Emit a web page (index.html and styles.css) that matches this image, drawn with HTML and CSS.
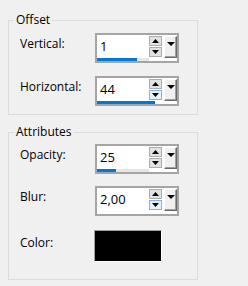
FILE: index.html
```html
<!DOCTYPE html>
<html>
<head>
	<meta charset="UTF-8">
	<title>Shadow</title>
	<link rel="stylesheet" href="styles.css">
</head>
<body>
	<fieldset class="group group-offset">
		<legend>Offset</legend>
		<div class="row">
			<label class="name">Vertical:</label>
			<div class="spin">
				<div class="field">
					<span class="value">1</span>
					<div class="track"><div class="fill" style="width:40px"></div></div>
				</div>
				<div class="arrows">
					<span class="arrow"><svg width="7" height="4"><path d="M0 4h7L3.5 0z"/></svg></span>
					<span class="arrow"><svg width="7" height="4"><path d="M0 0h7L3.5 4z"/></svg></span>
				</div>
				<span class="drop"><svg width="8" height="4"><path d="M0 0h8L4 4z"/></svg></span>
			</div>
		</div>
		<div class="row">
			<label class="name">Horizontal:</label>
			<div class="spin">
				<div class="field">
					<span class="value">44</span>
					<div class="track"><div class="fill" style="width:58px"></div></div>
				</div>
				<div class="arrows">
					<span class="arrow"><svg width="7" height="4"><path d="M0 4h7L3.5 0z"/></svg></span>
					<span class="arrow hot"><svg width="7" height="4"><path d="M0 0h7L3.5 4z"/></svg></span>
				</div>
				<span class="drop"><svg width="8" height="4"><path d="M0 0h8L4 4z"/></svg></span>
			</div>
		</div>
	</fieldset>

	<fieldset class="group group-attr">
		<legend>Attributes</legend>
		<div class="row">
			<label class="name">Opacity:</label>
			<div class="spin">
				<div class="field">
					<span class="value">25</span>
					<div class="track"><div class="fill" style="width:19px"></div></div>
				</div>
				<div class="arrows">
					<span class="arrow"><svg width="7" height="4"><path d="M0 4h7L3.5 0z"/></svg></span>
					<span class="arrow"><svg width="7" height="4"><path d="M0 0h7L3.5 4z"/></svg></span>
				</div>
				<span class="drop"><svg width="8" height="4"><path d="M0 0h8L4 4z"/></svg></span>
			</div>
		</div>
		<div class="row">
			<label class="name">Blur:</label>
			<div class="spin">
				<div class="field">
					<span class="value">2,00</span>
					<div class="track blank"></div>
				</div>
				<div class="arrows">
					<span class="arrow"><svg width="7" height="4"><path d="M0 4h7L3.5 0z"/></svg></span>
					<span class="arrow hot"><svg width="7" height="4"><path d="M0 0h7L3.5 4z"/></svg></span>
				</div>
				<span class="drop"><svg width="8" height="4"><path d="M0 0h8L4 4z"/></svg></span>
			</div>
		</div>
		<div class="row row-color">
			<label class="name">Color:</label>
			<div class="swatch"></div>
		</div>
	</fieldset>
</body>
</html>
```

FILE: styles.css
```css
*{
	margin: 0;
	padding: 0;
	box-sizing: border-box;
}
body{
	background: #f0f0f0;
	font-family: "Open Sans", "Liberation Sans", sans-serif;
	font-size: 12px;
	color: #000;
}
.group{
	width: 190px;
	margin-left: 8px;
	border: 1px solid #dcdcdc;
	padding: 5px 0 8px 11px;
	display: flex;
	flex-direction: column;
	gap: 13px;
}
.group-offset{
	margin-top: 12px;
}
.group-attr{
	margin-top: 9px;
	padding-top: 4px;
	padding-bottom: 17px;
	gap: 12px;
}
.group legend{
	line-height: 16px;
	padding: 0 2px;
	margin-left: -6px;
}
.row{
	display: grid;
	grid-template-columns: 75px auto;
	align-items: start;
}
.row-color{
	margin-top: 2px;
}
.name{
	line-height: 16px;
	padding-top: 3px;
}
.row-color .name{
	padding-top: 5px;
}
.spin{
	width: 84px;
	height: 30px;
	border: 2px solid #a5a5a5;
	background: #fff;
	display: flex;
}
.field{
	width: 52px;
	display: flex;
	flex-direction: column;
	justify-content: space-between;
}
.value{
	font-size: 13px;
	line-height: 17px;
	padding: 3px 0 0 3px;
}
.track{
	height: 3px;
	background: #e6e6e6;
}
.track.blank{
	background: #fff;
}
.fill{
	height: 3px;
	background: #0078d7;
}
.arrows{
	margin-top: 1px;
	display: flex;
	flex-direction: column;
	gap: 1px;
}
.arrow{
	width: 13px;
	height: 10px;
	border: 1px solid #adadad;
	background: #e1e1e1;
	display: flex;
	align-items: center;
	justify-content: center;
}
.arrow.hot{
	border-color: #7eb4ea;
	background: #e5f1fb;
}
.drop{
	width: 13px;
	height: 22px;
	margin: 1px 0 0 2px;
	background: #f0f0f0;
	border: 1px solid;
	border-color: #fff #696969 #696969 #fff;
	box-shadow: inset -1px -1px #a0a0a0;
	display: flex;
	justify-content: center;
	padding-top: 5px;
}
svg{
	display: block;
	fill: #000;
}
.swatch{
	width: 68px;
	height: 32px;
	margin-left: -1px;
	background: #000;
	border: 1px solid;
	border-color: #a0a0a0 #fff #fff #a0a0a0;
}
```
